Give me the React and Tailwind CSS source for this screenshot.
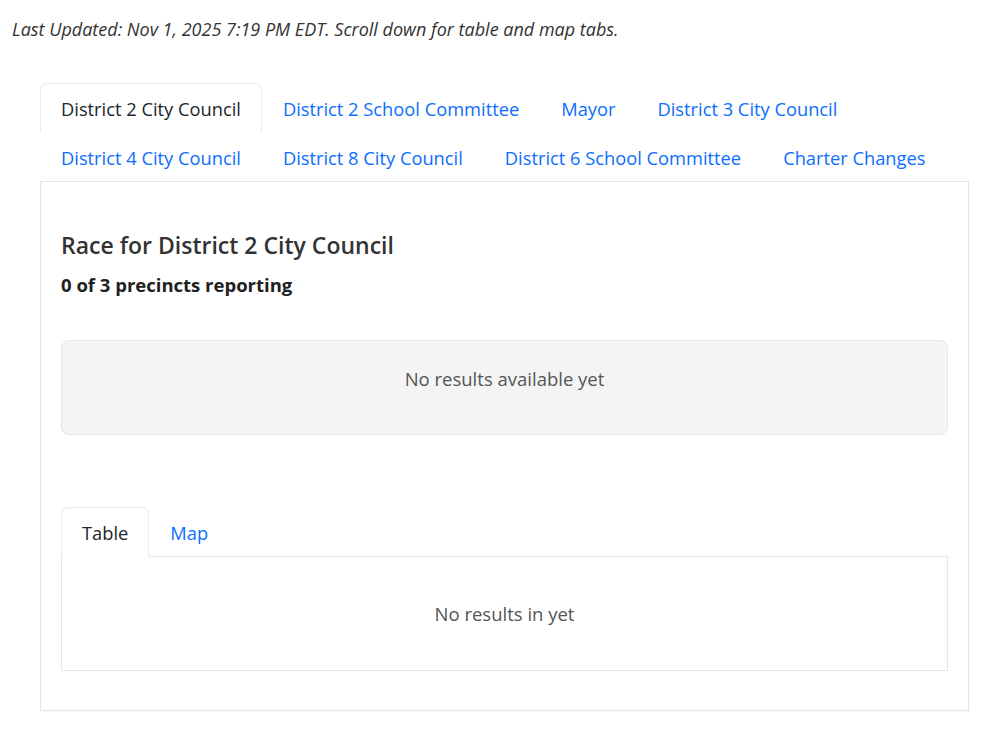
import React from "react";

const mainTabs = [
  "District 2 City Council",
  "District 2 School Committee",
  "Mayor",
  "District 3 City Council",
  "District 4 City Council",
  "District 8 City Council",
  "District 6 School Committee",
  "Charter Changes",
];

function Tab({ label, active }) {
  return (
    <div
      className={
        active
          ? "-mb-px px-5 pt-[12px] pb-[10px] leading-[26px] text-[18.3px] text-[#212529] bg-white border border-[#ebebeb] border-b-white rounded-t-[7px]"
          : "-mb-px px-5 pt-[12px] pb-[10px] leading-[26px] text-[18.3px] text-[#0d6efd] border border-transparent rounded-t-[7px]"
      }
    >
      {label}
    </div>
  );
}

export default function App() {
  return (
    <div
      className="min-h-[732px] bg-white px-3 pt-[16px] pb-6"
      style={{ fontFamily: '"Open Sans", "Noto Sans", sans-serif' }}
    >
      <p className="italic text-[18px] leading-[26px] text-[#333]">
        Last Updated: Nov 1, 2025 7:19 PM EDT. Scroll down for table and map tabs.
      </p>

      <div className="mx-[28px] mt-[41px] w-[929px]">
        <div className="flex flex-wrap border-b border-[#e6e6e6]">
          {mainTabs.map((t, i) => (
            <Tab key={t} label={t} active={i === 0} />
          ))}
        </div>

        <div className="border-x border-b border-[#e6e6e6] px-5 pt-[49px] pb-[39px] shadow-[0_1px_1px_rgba(0,0,0,0.03)]">
          <h3 className="text-[23px] leading-[29px] font-semibold text-[#333]">
            Race for District 2 City Council
          </h3>
          <p className="mt-[13px] text-[18.5px] leading-[24px] font-bold text-[#212121]">
            0 of 3 precincts reporting
          </p>

          <div className="mt-[43px] h-[95px] rounded-[8px] border border-[#e6e6e6] bg-[#f4f4f4] pt-[25px] text-center text-[18.5px] leading-[26px] text-[#555]">
            No results available yet
          </div>

          <div className="mt-[72px]">
            <div className="flex border-b border-[#e6e6e6]">
              <Tab label="Table" active />
              <Tab label="Map" />
            </div>
            <div className="flex h-[114px] items-center justify-center border-x border-b border-[#e6e6e6] text-[18.5px] leading-[26px] text-[#555]">
              No results in yet
            </div>
          </div>
        </div>
      </div>
    </div>
  );
}
